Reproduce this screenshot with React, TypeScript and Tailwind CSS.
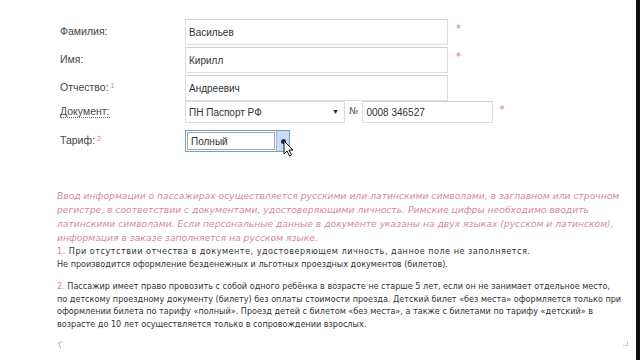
import React from 'react'

const font = { fontFamily: '"DejaVu Sans", Verdana, sans-serif' }
const arial = { fontFamily: '"Liberation Sans", Arial, sans-serif' }

function Star({ className = '' }: { className?: string }) {
  return <span className={`text-[10px] leading-none text-[#d97a8e] ${className}`}>*</span>
}

function TextInput({ value, width }: { value: string; width: string }) {
  return (
    <div
      className={`${width} h-full border border-[#dedede] border-t-[#cfcfcf] bg-white flex items-center pl-[3px] text-[10px] text-[#333]`}
      style={arial}
    >
      {value}
    </div>
  )
}

function Label({ children }: { children: React.ReactNode }) {
  return (
    <div className="w-[125px] shrink-0 text-[10.5px] text-[#484848]" style={arial}>
      {children}
    </div>
  )
}

const pinkLines = [
  'Ввод информации о пассажирах осуществляется русскими или латинскими символами, в заглавном или строчном',
  'регистре, в соответствии с документами, удостоверяющими личность. Римские цифры необходимо вводить',
  'латинскими символами. Если персональные данные в документе указаны на двух языках (русском и латинском),',
  'информация в заказе заполняется на русском языке.',
]

const note2 = [
  'Пассажир имеет право провозить с собой одного ребёнка в возрасте не старше 5 лет, если он не занимает отдельное место,',
  'по детскому проездному документу (билету) без оплаты стоимости проезда. Детский билет «без места» оформляется только при',
  'оформлении билета по тарифу «полный». Проезд детей с билетом «без места», а также с билетами по тарифу «детский» в',
  'возрасте до 10 лет осуществляется только в сопровождении взрослых.',
]

export default function App() {
  return (
    <div className="w-[640px] h-[360px] overflow-hidden bg-white flex" style={font}>
      <div className="relative flex-1 pl-[60px] pt-[19px]">
        {/* form rows */}
        <div className="flex flex-col">
          <div className="flex items-center h-[26px] mb-[2px]">
            <Label>Фамилия:</Label>
            <TextInput value="Васильев" width="w-[263px]" />
            <Star className="ml-[8px] self-start mt-[5px]" />
          </div>
          <div className="flex items-center h-[26px] mb-[2px]">
            <Label>Имя:</Label>
            <TextInput value="Кирилл" width="w-[263px]" />
            <Star className="ml-[8px] self-start mt-[5px]" />
          </div>
          <div className="flex items-center h-[26px]">
            <Label>
              Отчество:<sup className="text-[7px] text-[#d97a8e] ml-[2px]">1</sup>
            </Label>
            <TextInput value="Андреевич" width="w-[263px]" />
          </div>
          <div className="flex items-center h-[22px] mb-[7px]">
            <Label>
              <span className="border-b border-dotted border-[#666]">Документ:</span>
            </Label>
            <div
              className="w-[160px] h-full border border-[#dedede] bg-white flex items-center justify-between pl-[3px] pr-[5px] text-[10px] text-[#333]"
              style={arial}
            >
              <span>ПН Паспорт РФ</span>
              <span className="text-[7px] text-[#222]">▼</span>
            </div>
            <span className="ml-[4px] mr-[4px] text-[9px] text-[#555]">№</span>
            <TextInput value="0008 346527" width="w-[131px]" />
            <Star className="ml-[6px] self-start mt-[4px]" />
          </div>
          <div className="flex items-center h-[22px]">
            <Label>
              Тариф:<sup className="text-[7px] text-[#d97a8e] ml-[2px]">2</sup>
            </Label>
            <div
              className="w-[105px] h-full border border-[#7f9db9] bg-white flex items-stretch text-[10px] text-[#333]"
              style={arial}
            >
              <div className="flex-1 flex items-center pl-[3px] border border-[#9ab] m-[1px]">Полный</div>
              <div className="w-[13px] bg-[#c9dbf2] border-l border-[#9db6d6] flex items-center justify-center">
                <span className="w-[5px] h-[5px] rounded-full bg-[#1d2f55]" />
              </div>
            </div>
          </div>
        </div>

        {/* info text */}
        <div className="mt-[37px] w-[575px] -ml-[3px]">
          <div className="italic text-[9.2px] leading-[14px] text-[#d58a9d] whitespace-nowrap">
            {pinkLines.map((l) => (
              <div key={l}>{l}</div>
            ))}
          </div>
          <div className="text-[8.1px] leading-[13px] text-[#333] whitespace-nowrap">
            <div className="tracking-[0.5px]">
              <span className="text-[#d97a8e]">1.</span> При отсутствии отчества в документе, удостоверяющем личность, данное поле не заполняется.
            </div>
            <div>Не производится оформление безденежных и льготных проездных документов (билетов).</div>
          </div>
          <div className="mt-[9px] text-[8.1px] leading-[12.6px] text-[#333] whitespace-nowrap">
            {note2.map((l, i) => (
              <div key={l}>
                {i === 0 && <span className="text-[#d97a8e]">2. </span>}
                {l}
              </div>
            ))}
          </div>
          <div className="mt-[12px] ml-[2px] w-[4px] h-[6px] border-l border-t border-[#bbb] rotate-[-20deg]" />
        </div>

        {/* mouse pointer over the select button */}
        <svg className="absolute left-[283px] top-[140px]" width="11" height="17" viewBox="0 0 11 17">
          <path d="M1 1 L1 14 L4 11 L6.5 16 L8.5 15 L6 10 L10 10 Z" fill="#fff" stroke="#111" strokeWidth="1" strokeLinejoin="round" />
        </svg>
        <div className="absolute right-[8px] bottom-[14px] w-[5px] h-[5px] border-r border-b border-[#ccc]" />
      </div>
      <div className="w-[4px] h-full bg-[#141010]" />
    </div>
  )
}
